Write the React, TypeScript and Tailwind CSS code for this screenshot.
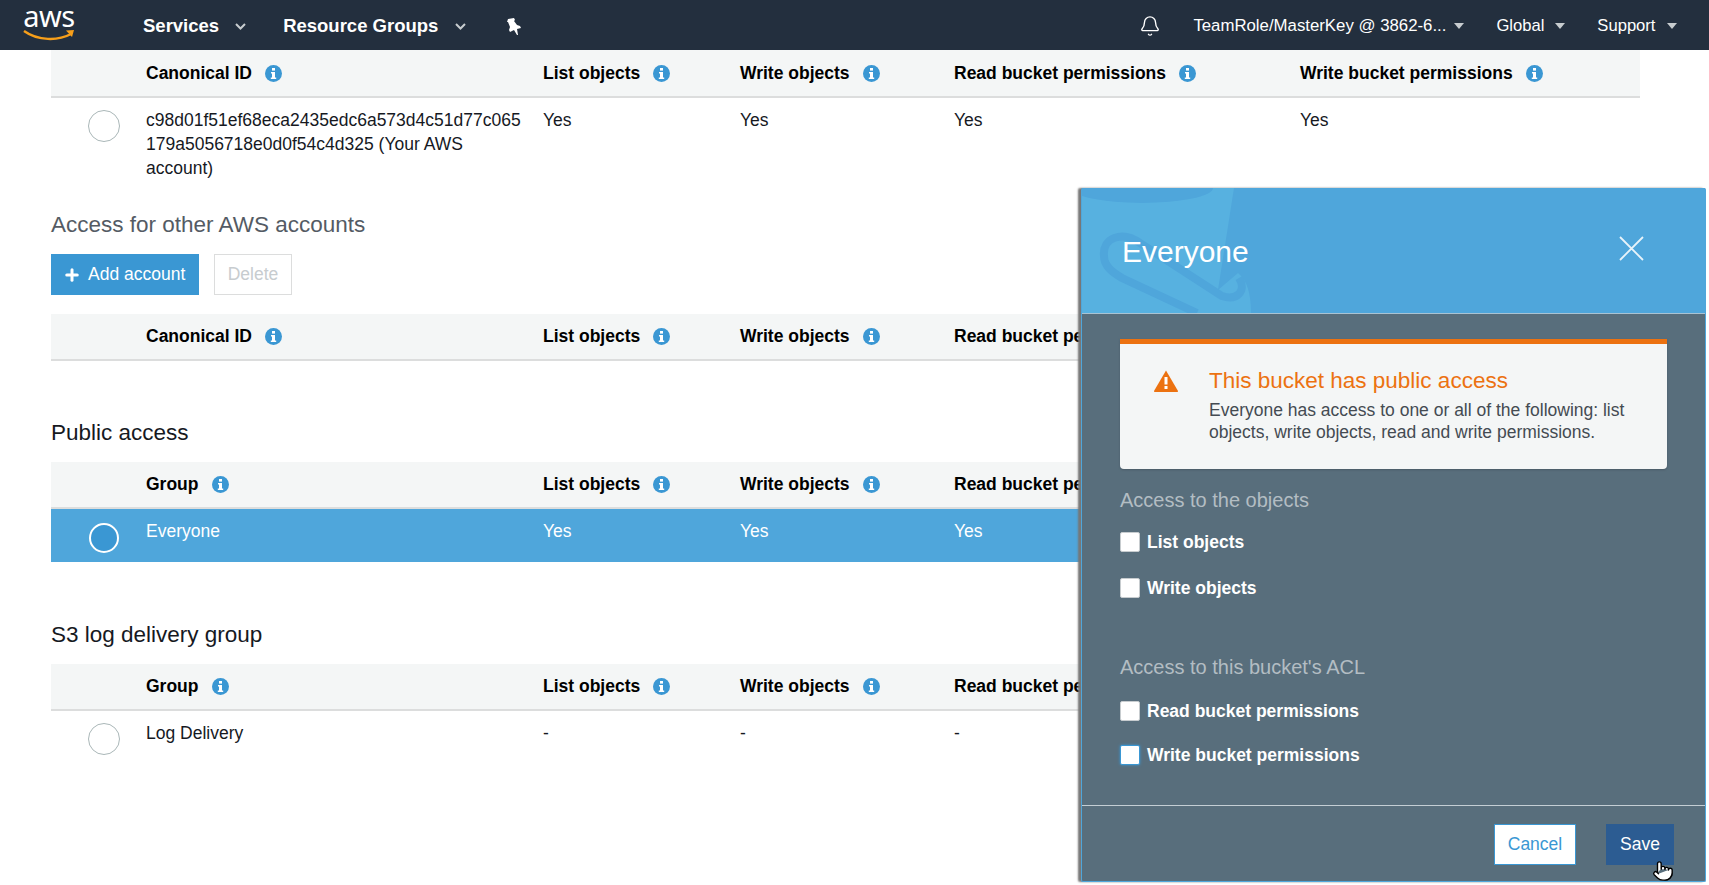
import { Bell, Plus, Pointer } from 'lucide-react';

const grid = 'grid grid-cols-[95px_397px_197px_214px_346px_340px] w-[1589px]';

function InfoIcon() {
    return (
        <svg viewBox="0 0 17 17" className="w-[17px] h-[17px] shrink-0">
            <circle cx="8.5" cy="8.5" r="8.5" fill="#3a97d3" />
            <rect x="7" y="3" width="3" height="2.6" fill="#fff" />
            <path d="M6 7h4v5.4h1.2V14H5.8v-1.6H7V8.5H6z" fill="#fff" />
        </svg>
    );
}

function HeaderCell({ label }: { label: string }) {
    return (
        <div className="flex items-center gap-[13px] font-bold text-[17.5px] text-[#000]">
            <span>{label}</span>
            <InfoIcon />
        </div>
    );
}

function TableHeader({ first, short }: { first: string; short?: boolean }) {
    return (
        <div className={`${grid} ${short ? 'h-[47px]' : 'h-[48px]'} items-center bg-[#f4f6f6] border-b-2 border-[#dcdddd]`}>
            <div />
            <HeaderCell label={first} />
            <HeaderCell label="List objects" />
            <HeaderCell label="Write objects" />
            <HeaderCell label="Read bucket permissions" />
            <HeaderCell label="Write bucket permissions" />
        </div>
    );
}

function Radio({ selected }: { selected?: boolean }) {
    return selected ? (
        <div className="ml-[38px] w-[30px] h-[30px] rounded-full border-[2.5px] border-white bg-[#3a97d3]" />
    ) : (
        <div className="ml-[37px] w-[32px] h-[32px] rounded-full border border-[#aab7b8] bg-white" />
    );
}

function Row({ name, value, cols, selected }: { name: string; value: string; cols: number; selected?: boolean }) {
    return (
        <div className={`${grid} pt-[10px] text-[17.5px] leading-[24px] ${selected ? 'h-[53px] bg-[#4fa6db] text-white' : 'text-[#16191f]'}`}>
            <div className={selected ? 'pt-[4px]' : 'pt-[2px]'}>
                <Radio selected={selected} />
            </div>
            <div className="pr-[17px] break-words">{name}</div>
            {Array.from({ length: cols }).map((_, i) => (
                <div key={i}>{value}</div>
            ))}
        </div>
    );
}

function Caret() {
    return (
        <svg viewBox="0 0 10 6" className="w-[10px] h-[6px] shrink-0">
            <path d="M0 0h10L5 6z" fill="#c7cccf" />
        </svg>
    );
}

function Chevron() {
    return (
        <svg viewBox="0 0 11 7" className="w-[11px] h-[7px] shrink-0">
            <path d="M1 1l4.5 4.5L10 1" fill="none" stroke="#c7cccf" strokeWidth="2" />
        </svg>
    );
}

function NavBar() {
    return (
        <header className="h-[50px] shrink-0 bg-[#232f3e] flex items-center pt-[2px] text-white relative z-10">
            <div className="w-[143px] pl-[23px] shrink-0 -mt-[2px]">
                <div className="w-[52px] h-[50px] flex flex-col items-center pt-[1px]">
                    <span className="font-['Noto_Sans',sans-serif] text-[29px] leading-[30px] tracking-[-0.5px] text-white">aws</span>
                    <svg viewBox="0 0 52 12" className="w-[52px] h-[12px] -mt-[2px]">
                        <path d="M1 2c14 10 34 10 47 3" fill="none" stroke="#f79f1a" strokeWidth="2.4" />
                        <path d="M43 1.5l8-.5-2 7z" fill="#f79f1a" />
                    </svg>
                </div>
            </div>
            <span className="font-bold text-[18.5px]">Services</span>
            <span className="ml-[16px]"><Chevron /></span>
            <span className="ml-[37px] font-bold text-[18.5px]">Resource Groups</span>
            <span className="ml-[17px]"><Chevron /></span>
            <svg viewBox="0 0 16 17" className="ml-[40px] w-[16px] h-[17px]">
                <path d="M2 1l6-1 1 2-1 1 3 4 3 1 1 2-4 1 1 6-1 0-3-5-4 2-1-2 1-3-2-5-1 0z" fill="#fff" />
            </svg>
            <Bell className="ml-[617px] w-[22px] h-[22px] text-white" strokeWidth={1.5} />
            <span className="ml-[32px] text-[16.8px]">TeamRole/MasterKey @ 3862-6...</span>
            <span className="ml-[8px]"><Caret /></span>
            <span className="ml-[32px] text-[16.6px]">Global</span>
            <span className="ml-[11px]"><Caret /></span>
            <span className="ml-[32px] text-[16.6px]">Support</span>
            <span className="ml-[12px]"><Caret /></span>
        </header>
    );
}

function Check({ label, focused }: { label: string; focused?: boolean }) {
    return (
        <div className="flex items-center h-[20px] gap-[7px]">
            <div className={`w-[20px] h-[20px] rounded-[2px] bg-white ${focused ? 'border border-[#3a97d3] shadow-[0_0_3px_#3a97d3]' : 'border border-[#c7cccf]'}`} />
            <span className="font-bold text-[17.5px] text-white">{label}</span>
        </div>
    );
}

function Panel() {
    return (
        <aside className="absolute left-[1081px] top-[188px] w-[625px] h-[694px] flex flex-col bg-[#586e7c] border border-[#4fa6db] border-t-0 rounded-[2px] shadow-[-3px_0_2px_#777]">
            <div className="relative h-[126px] shrink-0 bg-[#4fa6db] border-b border-[#a9c3d3] overflow-hidden flex items-center justify-between pl-[40px] pr-[61px]">
                <svg viewBox="0 0 175 125" className="absolute left-0 top-0 w-[175px] h-[125px]">
                    <path d="M0 0H152L136 102L156 85C165 92 169 105 169 125H0z" fill="#57b1e0" />
                    <ellipse cx="60" cy="0" rx="71" ry="15" fill="#4fa6db" />
                    <path d="M157 90C165 103 155 113 140 108L58 55C40 42 20 50 22 68C22 78 30 84 40 90L115 125" fill="none" stroke="#4fa6db" strokeWidth="8" />
                </svg>
                <span className="relative text-[30px] text-white mt-[1px]">Everyone</span>
                <svg viewBox="0 0 25 25" className="relative w-[25px] h-[25px] -mt-[5px]">
                    <path d="M1 1l23 23M24 1L1 24" stroke="#e8f3fa" strokeWidth="1.8" fill="none" />
                </svg>
            </div>

            <div className="flex-1 px-[38px] pt-[25px]">
                <div className="h-[130px] w-[547px] bg-[#f4f6f6] border-t-[5px] border-[#ec7211] rounded-b-[4px] shadow-[0_1px_2px_#4a5a66] flex">
                    <div className="w-[89px] pl-[34px] pt-[26px] shrink-0">
                        <svg viewBox="0 0 24 22" className="w-[24px] h-[22px]">
                            <path d="M12 0.5L24 21a.8.8 0 0 1-.7 1H.7a.8.8 0 0 1-.7-1z" fill="#ec7211" />
                            <rect x="10.5" y="7" width="3" height="7.5" fill="#fff" />
                            <rect x="10.5" y="16" width="3" height="3" fill="#fff" />
                        </svg>
                    </div>
                    <div className="pt-[19px]">
                        <div className="text-[22.5px] leading-[36px] text-[#ec7211]">This bucket has public access</div>
                        <div className="w-[440px] text-[17.5px] leading-[22px] text-[#444b52]">
                            Everyone has access to one or all of the following: list objects, write objects, read and write permissions.
                        </div>
                    </div>
                </div>

                <div className="mt-[17px] text-[20px] leading-[28px] text-[#b3bdc3]">Access to the objects</div>
                <div className="mt-[18px] flex flex-col gap-[26px]">
                    <Check label="List objects" />
                    <Check label="Write objects" />
                </div>
                <div className="mt-[55px] text-[20px] leading-[28px] text-[#b3bdc3]">Access to this bucket's ACL</div>
                <div className="mt-[20px] flex flex-col gap-[24px]">
                    <Check label="Read bucket permissions" />
                    <Check label="Write bucket permissions" focused />
                </div>
            </div>

            <div className="relative h-[76px] shrink-0 border-t border-[#c4ced4] flex items-start justify-end gap-[30px] pt-[18px] pr-[31px]">
                <button className="w-[82px] h-[41px] bg-white border border-[#3a97d3] text-[#3a97d3] text-[17.5px]">Cancel</button>
                <button className="w-[68px] h-[41px] bg-[#2c5c92] text-white text-[17.5px]">Save</button>
                <Pointer className="absolute left-[570px] top-[54px] w-[22px] h-[22px] text-black fill-white" strokeWidth={1.5} />
            </div>
        </aside>
    );
}

export default function App() {
    return (
        <div className="relative h-screen w-full overflow-hidden bg-white font-['Liberation_Sans',Arial,sans-serif] flex flex-col">
            <NavBar />
            <main className="pl-[51px]">
                <TableHeader first="Canonical ID" />
                <Row name="c98d01f51ef68eca2435edc6a573d4c51d77c065 179a5056718e0d0f54c4d325 (Your AWS account)" value="Yes" cols={4} />

                <h3 className="mt-[30px] text-[22.5px] leading-[30px] text-[#545b64]">Access for other AWS accounts</h3>
                <div className="mt-[14px] flex gap-[15px]">
                    <button className="w-[148px] h-[41px] bg-[#3a97d3] text-white text-[17.5px] flex items-center gap-[7px] pl-[12px]">
                        <Plus className="w-[18px] h-[18px]" strokeWidth={4} />
                        Add account
                    </button>
                    <button className="w-[78px] h-[41px] bg-white border border-[#dcdddd] text-[#c7cccf] text-[17.5px]">Delete</button>
                </div>
                <div className="mt-[19px]">
                    <TableHeader first="Canonical ID" short />
                </div>

                <h3 className="mt-[57px] text-[22.5px] leading-[30px] text-[#16191f]">Public access</h3>
                <div className="mt-[14px]">
                    <TableHeader first="Group" short />
                </div>
                <Row name="Everyone" value="Yes" cols={3} selected />

                <h3 className="mt-[58px] text-[22.5px] leading-[30px] text-[#16191f]">S3 log delivery group</h3>
                <div className="mt-[14px]">
                    <TableHeader first="Group" short />
                </div>
                <Row name="Log Delivery" value="-" cols={3} />
            </main>
            <Panel />
        </div>
    );
}
